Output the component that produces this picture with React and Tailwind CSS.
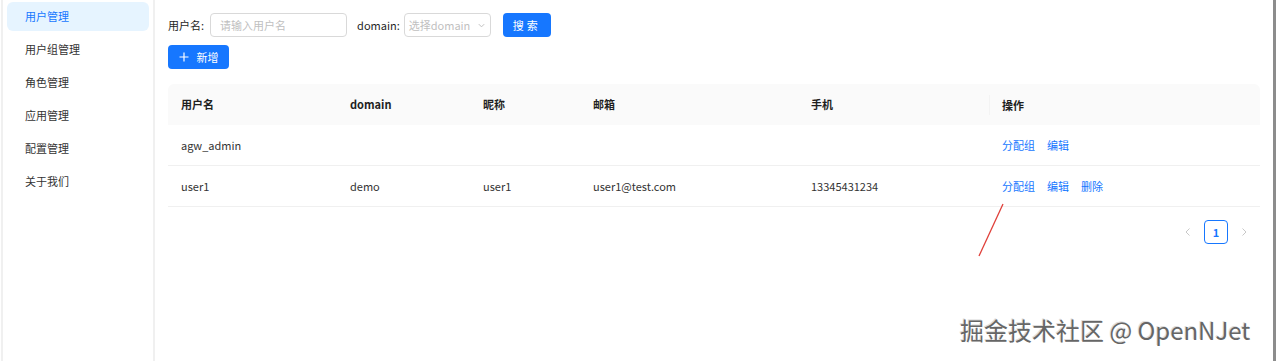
import React from 'react';

const menu = ['用户管理', '用户组管理', '角色管理', '应用管理', '配置管理', '关于我们'];

const rows = [
    { name: 'agw_admin', domain: '', nick: '', mail: '', phone: '', del: false },
    { name: 'user1', domain: 'demo', nick: 'user1', mail: 'user1@test.com', phone: '13345431234', del: true },
];

const cols = 'grid grid-cols-[169px_133px_110px_218px_191px_1fr]';

const App = () => {
    return (
        <div
            className="relative flex h-[361px] w-[1280px] overflow-hidden bg-white text-[11px] text-[#1f1f1f]"
            style={{ fontFamily: '"Noto Sans CJK SC", "Noto Sans", sans-serif' }}
        >
            {/* sidebar */}
            <div className="ml-[1px] flex w-[154px] shrink-0 flex-col border-l-2 border-r-2 border-[#f0f0f0] pt-[2px]">
                {menu.map((m, i) => (
                    <div
                        key={m}
                        className={
                            i === 0
                                ? 'mx-[4px] flex h-[29px] items-center rounded-md bg-[#e6f4ff] pl-[18px] text-[#1677ff]'
                                : 'mx-[4px] mt-[4px] flex h-[29px] items-center pl-[18px] text-[#333]'
                        }
                    >
                        {m}
                    </div>
                ))}
            </div>

            {/* main */}
            <div className="flex flex-1 flex-col pl-[13px] pr-[13px] pt-[13px]">
                <div className="flex items-center">
                    <span>用户名:</span>
                    <div className="ml-[6px] flex h-[24px] w-[137px] items-center rounded border border-[#d9d9d9] px-[9px] text-[#bfbfbf]">
                        请输入用户名
                    </div>
                    <span className="ml-[10px]">domain:</span>
                    <div className="ml-[4px] flex h-[24px] w-[87px] items-center justify-between rounded border border-[#d9d9d9] px-[4px] text-[#bfbfbf]">
                        <span>选择domain</span>
                        <svg width="9" height="9" viewBox="0 0 10 10" fill="none" stroke="#bfbfbf" strokeWidth="1.1">
                            <path d="M2 3.5 5 6.5 8 3.5" />
                        </svg>
                    </div>
                    <button className="ml-[12px] flex h-[24px] w-[48px] items-center justify-center rounded bg-[#1677ff] tracking-[3px] text-white">
                        搜索
                    </button>
                </div>
                <button className="mt-[8px] flex h-[24px] w-[61px] items-center justify-center gap-[8px] rounded bg-[#1677ff] text-white">
                    <svg width="10" height="10" viewBox="0 0 10 10" stroke="white" strokeWidth="1.2">
                        <path d="M5 0.5v9M0.5 5h9" />
                    </svg>
                    <span>新增</span>
                </button>

                {/* table */}
                <div className="mt-[15px] w-[1092px]">
                    <div className={`${cols} h-[41px] items-center rounded-t-md bg-[#fafafa] font-semibold`}>
                        <div className="pl-[13px]">用户名</div>
                        <div className="pl-[13px]">domain</div>
                        <div className="pl-[13px]">昵称</div>
                        <div className="pl-[13px]">邮箱</div>
                        <div className="pl-[13px]">手机</div>
                        <div className="h-[20px] border-l border-[#f3f3f3] pl-[12px] leading-[20px]">操作</div>
                    </div>
                    {rows.map((r) => (
                        <div key={r.name} className={`${cols} h-[41px] items-center border-b border-[#f0f0f0] text-[#333]`}>
                            <div className="pl-[13px]">{r.name}</div>
                            <div className="pl-[13px]">{r.domain}</div>
                            <div className="pl-[13px]">{r.nick}</div>
                            <div className="pl-[13px]">{r.mail}</div>
                            <div className="pl-[13px]">{r.phone}</div>
                            <div className="flex gap-[12px] pl-[13px] text-[#1677ff]">
                                <span>分配组</span>
                                <span>编辑</span>
                                {r.del && <span>删除</span>}
                            </div>
                        </div>
                    ))}
                    <div className="mt-[13px] flex items-center justify-end gap-[12px] pr-[12px]">
                        <span className="text-[#c8c8c8]">
                            <svg width="8" height="10" viewBox="0 0 8 10" fill="none" stroke="currentColor" strokeWidth="1">
                                <path d="M5.5 1.5 2 5l3.5 3.5" />
                            </svg>
                        </span>
                        <div className="flex h-[24px] w-[24px] items-center justify-center rounded border border-[#1677ff] font-semibold text-[#1677ff]">
                            1
                        </div>
                        <span className="text-[#c8c8c8]">
                            <svg width="8" height="10" viewBox="0 0 8 10" fill="none" stroke="currentColor" strokeWidth="1">
                                <path d="M2.5 1.5 6 5 2.5 8.5" />
                            </svg>
                        </span>
                    </div>
                </div>
            </div>

            {/* right edge bar */}
            <div className="mr-[5px] w-[3px] shrink-0 bg-[#8c8c8c]" />

            {/* annotation arrow */}
            <svg className="absolute left-[975px] top-[200px]" width="34" height="60" viewBox="0 0 34 60">
                <path d="M28 4 4 56" stroke="#e0403a" strokeWidth="1.3" fill="none" />
            </svg>

            {/* watermark */}
            <div
                className="absolute left-[960px] top-[314px] text-[24px] leading-[32px] text-[#666]"
                style={{ textShadow: '1px 1px 0 #fff, -1px -1px 0 #ddd' }}
            >
                掘金技术社区 @ OpenNJet
            </div>
        </div>
    );
};

export default App;
